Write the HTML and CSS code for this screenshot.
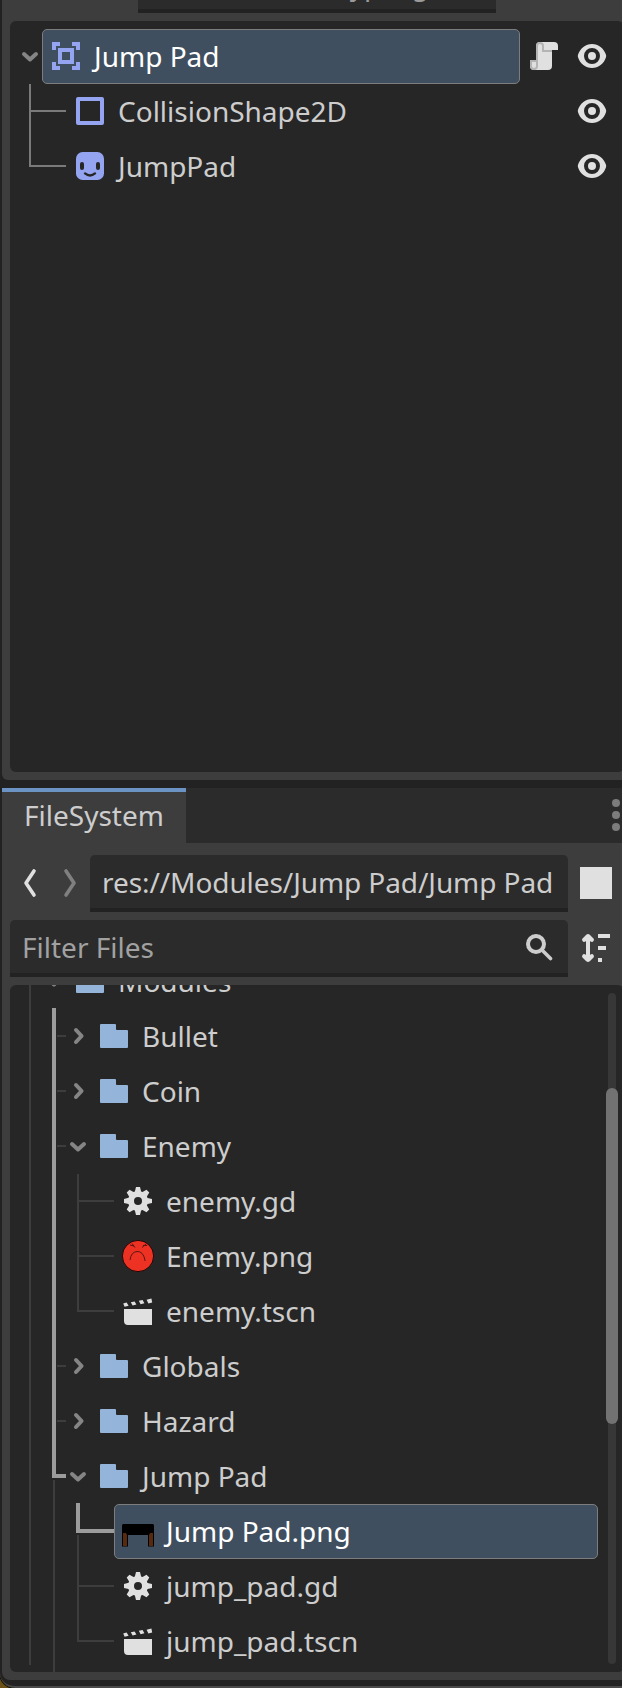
FILE: index.html
```
<!DOCTYPE html>
<html lang="en">
<head>
<meta charset="utf-8">
<title>Scene and FileSystem docks</title>
<link rel="stylesheet" href="styles.css">
</head>
<body>
<svg class="defs" width="0" height="0">
  <symbol id="down" viewBox="0 0 18 18"><path d="M3 7 9 12.500 15 7" /></symbol>
  <symbol id="right" viewBox="0 0 18 18"><path d="M7 3 12.600 9 7 15" /></symbol>
  <symbol id="eye" viewBox="0 0 16 16"><path fill="#e0e0e0" fill-rule="evenodd" d="M8 2C4.800 2 2 4.200 1 7.400q-.2.6 0 1.200C2 11.800 4.800 14 8 14s6-2.200 7-5.400q.2-.6 0-1.200C14 4.200 11.200 2 8 2zm0 2a4 4 0 0 1 0 8 4 4 0 0 1 0-8zm0 2a2 2 0 0 0 0 4 2 2 0 0 0 0-4z"/></symbol>
  <symbol id="folder" viewBox="0 0 16 16"><path fill="#94b4da" d="M1.500 2H8.500Q9 2 9 2.500V4.500Q9 5 9.500 5H14.500Q15 5 15 5.500V13.500Q15 14 14.500 14H1.500Q1 14 1 13.500V2.500Q1 2 1.500 2z"/></symbol>
  <symbol id="gear" viewBox="0 0 16 16"><path fill="#e0e0e0" fill-rule="evenodd" d="M7 1 6.440 3.250A5 5 0 0 0 5.740 3.540L3.760 2.350 2.350 3.760 3.540 5.740A5 5 0 0 0 3.250 6.430L1 7V9L3.250 9.560A5 5 0 0 0 3.540 10.260L2.350 12.240 3.760 13.650 5.740 12.460A5 5 0 0 0 6.440 12.750L7 15H9L9.560 12.750A5 5 0 0 0 10.260 12.460L12.240 13.650 13.650 12.240 12.460 10.260A5 5 0 0 0 12.750 9.560L15 9V7L12.750 6.440A5 5 0 0 0 12.460 5.740L13.650 3.760 12.240 2.350 10.260 3.540A5 5 0 0 0 9.560 3.250L9 1zM8 6A2 2 0 0 1 8 10 2 2 0 0 1 8 6z"/></symbol>
  <symbol id="clap" viewBox="0 0 16 16"><path fill="#e0e0e0" d="M1 7H15V15H3Q1 15 1 13zM.600 4.200l1.700-.4 1 1.600-2 .5zM4.400 3.600l1.900-.4.900 1.600-1.900.5zM8.400 2.900l1.900-.4.900 1.600-1.900.5zM12.300 2.400l2.400-.6.400 2-1.900.4z"/></symbol>
</svg>
<div class="docks">
  <section class="scene">
    <div class="scene-filter"><span>Filter: name, t:type, g</span></div>
    <div class="tree scene-tree">
      <div class="row root">
        <svg class="arrow" viewBox="0 0 18 18"><use href="#down"/></svg>
        <div class="selected scene-selected">
          <svg class="icon" viewBox="0 0 16 16" fill="#94a4f0"><path d="M1 1h4v2H3v2H1zM11 1h4v4h-2V3h-2zM1 11h2v2h2v2H1zM13 11h2v4h-4v-2h2z"/><path fill-rule="evenodd" d="M4 4h8v8H4zM6 6v4h4V6z"/></svg>
          <span class="name">Jump Pad</span>
        </div>
        <svg class="icon script" viewBox="0 0 16 16"><path fill="#e0e0e0" d="M6 1h7q2 0 2 2v2h-3v8q0 2-2 2H3q-2 0-2-2v-3h3V3q0-2 2-2z"/><path fill="#b4b4b4" d="M6 1Q4 1 4 3v7H1v3q0 2 2 2t2-2V3q0-1 1-1t1 1v3h5V5H8V3q0-2-2-2zM2 11h2v2q0 1-1 1t-1-1z"/></svg>
        <svg class="icon eye" viewBox="0 0 16 16"><use href="#eye"/></svg>
      </div>
      <div class="row child">
        <svg class="icon" viewBox="0 0 16 16"><rect x="2" y="2" width="12" height="12" fill="none" stroke="#94a4f0" stroke-width="2" stroke-linejoin="round"/></svg>
        <span class="label">CollisionShape2D</span>
        <svg class="icon eye" viewBox="0 0 16 16"><use href="#eye"/></svg>
      </div>
      <div class="row child last">
        <svg class="icon" viewBox="0 0 16 16"><rect x="1" y="1" width="14" height="14" rx="3.300" fill="#94a4f0"/><rect x="3" y="6" width="2" height="4" rx="1" fill="#262626"/><rect x="11" y="6" width="2" height="4" rx="1" fill="#262626"/><path d="M5.500 11.700q2.500 2 5 0" fill="none" stroke="#262626" stroke-width="1.200" stroke-linecap="round"/></svg>
        <span class="label">JumpPad</span>
        <svg class="icon eye" viewBox="0 0 16 16"><use href="#eye"/></svg>
      </div>
    </div>
  </section>

  <section class="files">
    <header class="tabs">
      <div class="tab">FileSystem</div>
      <svg class="more" viewBox="0 0 8 32" fill="#7c7c7c"><circle cx="4" cy="4" r="4"/><circle cx="4" cy="16" r="4"/><circle cx="4" cy="28" r="4"/></svg>
    </header>
    <div class="content">
      <div class="path-bar">
        <svg class="nav" viewBox="0 0 16 32"><path d="M12 4 4 16l8 12" stroke="#e0e0e0"/></svg>
        <svg class="nav forward" viewBox="0 0 16 32"><path d="M4 4l8 12-8 12" stroke="#808080"/></svg>
        <div class="field path">res://Modules/Jump Pad/Jump Pad</div>
        <div class="split"></div>
      </div>
      <div class="filter-bar">
        <div class="field filter"><span>Filter Files</span>
          <svg class="search" viewBox="0 0 28 28" fill="none" stroke="#cdcdcd" stroke-width="4"><circle cx="10" cy="11" r="8"/><path d="M16 17l8.500 8.500" stroke-linecap="round" stroke-width="3.600"/></svg>
        </div>
        <svg class="sort" viewBox="0 0 32 32" fill="#e0e0e0"><path d="M10 2Q11 2 12 3l3.500 3.500q1 1 0 2.500T12.500 9.500L12 9V23l.5-.5Q14.500 21.500 15.500 23T15.500 25.500l-3.500 3.500Q11 30 10 30T8 29L4.500 25.500Q3.500 24.500 4.500 23T7.500 22.500L8 23V9l-.5.500Q5.500 10.500 4.500 9T4.500 6.500L8 3Q9 2 10 2zM20 2h12v4H20zM20 14h8v4h-8zM20 26h4v4h-4z"/></svg>
      </div>
      <div class="tree file-tree">
        <div class="list">
          <div class="row modules"><svg class="arrow" viewBox="0 0 18 18"><use href="#down"/></svg><svg class="icon" viewBox="0 0 16 16"><use href="#folder"/></svg><span class="label">Modules</span></div>
          <div class="row folder"><svg class="arrow" viewBox="0 0 18 18"><use href="#right"/></svg><svg class="icon" viewBox="0 0 16 16"><use href="#folder"/></svg><span class="label">Bullet</span></div>
          <div class="row folder"><svg class="arrow" viewBox="0 0 18 18"><use href="#right"/></svg><svg class="icon" viewBox="0 0 16 16"><use href="#folder"/></svg><span class="label">Coin</span></div>
          <div class="row folder"><svg class="arrow" viewBox="0 0 18 18"><use href="#down"/></svg><svg class="icon" viewBox="0 0 16 16"><use href="#folder"/></svg><span class="label">Enemy</span></div>
          <div class="row file"><svg class="icon" viewBox="0 0 16 16"><use href="#gear"/></svg><span class="label">enemy.gd</span></div>
          <div class="row file"><svg class="thumb" viewBox="0 0 32 32"><circle cx="16" cy="16" r="15.600" fill="#ed3223" stroke="#160505" stroke-width=".9"/><path d="M8 20Q9 12 15 11.500T23 20V21M10 3.500l3 4M8 5l4 1M24 4l-4 3.500M25 5.500l-4 0" fill="none" stroke="#5c1410" stroke-width="1"/></svg><span class="label">Enemy.png</span></div>
          <div class="row file last"><svg class="icon" viewBox="0 0 16 16"><use href="#clap"/></svg><span class="label">enemy.tscn</span></div>
          <div class="row folder"><svg class="arrow" viewBox="0 0 18 18"><use href="#right"/></svg><svg class="icon" viewBox="0 0 16 16"><use href="#folder"/></svg><span class="label">Globals</span></div>
          <div class="row folder"><svg class="arrow" viewBox="0 0 18 18"><use href="#right"/></svg><svg class="icon" viewBox="0 0 16 16"><use href="#folder"/></svg><span class="label">Hazard</span></div>
          <div class="row folder current"><svg class="arrow" viewBox="0 0 18 18"><use href="#down"/></svg><svg class="icon" viewBox="0 0 16 16"><use href="#folder"/></svg><span class="label">Jump Pad</span></div>
          <div class="row file picked"><div class="selected file-selected"><svg class="thumb" viewBox="0 0 32 32"><path d="M1 9h30l1 1v21.500h-6V20H6v11.500H0V10z" fill="#000"/><path d="M1 18h3l1 2v11H1zM31 18h-3l-1 2v11h4z" fill="#57290f"/></svg><span class="name">Jump Pad.png</span></div></div>
          <div class="row file"><svg class="icon" viewBox="0 0 16 16"><use href="#gear"/></svg><span class="label">jump_pad.gd</span></div>
          <div class="row file last"><svg class="icon" viewBox="0 0 16 16"><use href="#clap"/></svg><span class="label">jump_pad.tscn</span></div>
        </div>
        <div class="scrollbar"><div class="thumb-bar"></div></div>
      </div>
    </div>
  </section>
</div>
<div class="window-edge"></div>
</body>
</html>
```
FILE: styles.css
```
*, *::before, *::after { box-sizing: border-box; }
body {
  margin: 0;
  width: 622px;
  height: 1688px;
  overflow: hidden;
  background: #222;
  color: #cdcdcd;
  font: 28px/38px "Noto Sans", "Open Sans", sans-serif;
  white-space: nowrap;
  position: relative;
}
svg { display: block; flex: none; }
.defs { position: absolute; }
.docks {
  display: flex;
  flex-direction: column;
  gap: 8px;
  padding-left: 2px;
  width: 630px;
}

/* Scene dock */
.scene {
  height: 780px;
  padding: 0 6px 8px 8px;
  background: #3d3d3d;
  border-radius: 0 0 6px 6px;
  display: flex;
  flex-direction: column;
  gap: 8px;
}
.scene-filter {
  width: 358px;
  height: 13px;
  margin-left: 128px;
  padding: 0 54px 0 13px;
  background: #2b2b2b;
  border-bottom: 4px solid #222;
  display: flex;
  align-items: flex-end;
  overflow: hidden;
  color: #9b9b9b;
}
.scene-filter span { display: block; margin-bottom: 6px; }
.tree { background: #262626; border-radius: 6px; }
.scene-tree { flex: 1; padding-top: 8px; }
.row { height: 55px; display: flex; align-items: center; position: relative; }
.icon, .arrow, .thumb { margin-bottom: 1px; }
.icon { width: 32px; height: 32px; }
.arrow {
  width: 18px; height: 18px;
  fill: none; stroke: #858585; stroke-width: 4; stroke-linecap: round; stroke-linejoin: round;
}
.root .arrow { margin-left: 11px; margin-right: 3px; }
.selected {
  height: 55px;
  background: #404f5f;
  border: 1px solid #7d7d7d;
  border-radius: 5px;
  color: #fff;
  display: flex;
  align-items: center;
}
.name, .label { padding-bottom: 2px; }
.scene-selected { width: 478px; padding-left: 7px; gap: 12px; }
.script { margin-left: 8px; }
.eye { margin-left: auto; margin-right: 16px; }
.root .eye { margin-left: 16px; }
.child { padding-left: 64px; }
.child::before {
  content: ""; position: absolute; left: 19px; top: 0; width: 37px; height: 28px;
  border-left: 2px solid #7a7a7a; border-bottom: 2px solid #7a7a7a;
}
.child:not(.last)::after {
  content: ""; position: absolute; left: 19px; top: 28px; width: 2px; height: 27px; background: #7a7a7a;
}

/* FileSystem dock */
.files { height: 892px; display: flex; flex-direction: column; }
.tabs { height: 55px; background: #2b2b2b; display: flex; align-items: center; }
.tab {
  width: 184px; height: 55px; padding: 4px 0 0 22px;
  background: #3d3d3d; border-top: 4px solid #6b94c4;
}
.more { width: 8px; height: 32px; margin-left: 426px; margin-bottom: 1px; }
.content {
  flex: 1; min-height: 0;
  padding: 12px 6px 8px 8px;
  background: #3d3d3d;
  border-radius: 0 0 8px 8px;
  display: flex; flex-direction: column; gap: 8px;
}
.path-bar, .filter-bar { display: flex; align-items: center; height: 57px; }
.nav { width: 16px; height: 32px; margin: 0 0 1px 12px; fill: none; stroke-width: 3.6; stroke-linecap: round; stroke-linejoin: round; }
.forward { margin-left: 24px; margin-right: 12px; }
.field {
  height: 57px; background: #2b2b2b;
  border-bottom: 4px solid #222; border-radius: 5px 5px 0 0;
  display: flex; align-items: center;
}
.path { width: 478px; padding-left: 12px; letter-spacing: -0.08px; }
.split { width: 32px; height: 32px; margin: 0 0 1px 12px; background: #e0e0e0; }
.filter { width: 558px; padding: 0 14px 0 12px; justify-content: space-between; color: #a1a1a1; }
.search { width: 28px; height: 28px; margin-top: 1px; }
.sort { width: 32px; height: 32px; margin: 0 0 1px 10px; }
.file-tree { flex: 1; min-height: 0; display: flex; overflow: hidden; }
.list { flex: none; width: 588px; margin-top: -31px; position: relative; }
.list::before {
  content: ""; position: absolute; left: 19px; top: 0; width: 2px; height: 711px; background: #3d3d3d;
}
.list::after {
  content: ""; position: absolute; left: 43px; top: 526px; width: 2px; height: 192px; background: #3d3d3d;
}
.modules { padding-left: 35px; }
.folder { padding-left: 59px; }
.modules .icon, .folder .icon { margin-left: 11px; }
.label { margin-left: 12px; }
.folder::before {
  content: ""; position: absolute; left: 47px; top: 26px; width: 9px; height: 2px; background: #3d3d3d;
}
.folder.current::before {
  left: 42px; top: auto; bottom: 26px; width: 14px; height: 470px;
  border-left: 4px solid #9c9c9c; border-bottom: 4px solid #9c9c9c; background: none;
}
.file { padding-left: 112px; }
.file::before {
  content: ""; position: absolute; left: 67px; top: 0; width: 37px; height: 28px;
  border-left: 2px solid #3d3d3d; border-bottom: 2px solid #3d3d3d;
}
.file:not(.last)::after {
  content: ""; position: absolute; left: 67px; top: 28px; width: 2px; height: 27px; background: #3d3d3d;
}
.picked { padding-left: 104px; }
.picked::before { left: 66px; top: -1px; width: 38px; height: 30px; border: 0 solid #9c9c9c; border-width: 0 0 4px 4px; }
.picked:not(.last)::after { top: 31px; height: 24px; }
.thumb { width: 32px; height: 32px; }
.file-selected { width: 484px; padding-left: 7px; gap: 12px; }
.scrollbar {
  width: 8px; height: calc(100% - 16px);
  margin: 8px 0 0 10px; border-radius: 4px; background: #373737; position: relative;
}
.thumb-bar {
  position: absolute; left: -2px; top: 95px; width: 12px; height: 336px;
  border-radius: 6px; background: #727272;
}

/* Rounded lower border of the editor window, over the desktop */
.window-edge {
  position: absolute; left: 0; right: 0; bottom: 0; height: 40px;
  border-bottom: 2px solid #4a4a4a; border-bottom-left-radius: 15px;
  box-shadow: 0 0 0 1px #111, -6px 6px 0 6px #6a5216;
  clip-path: inset(0);
}
```
